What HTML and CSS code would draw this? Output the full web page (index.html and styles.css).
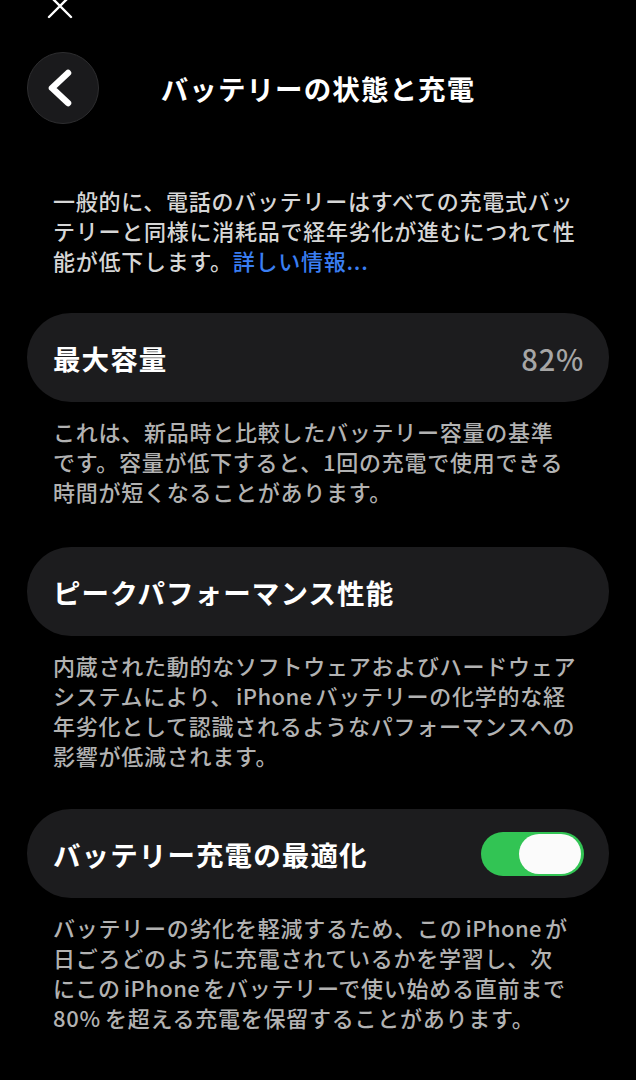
FILE: index.html
```html
<!DOCTYPE html>
<html lang="ja">
<head>
<meta charset="utf-8">
<title>バッテリーの状態と充電</title>
<link rel="stylesheet" href="styles.css">
</head>
<body>
<svg class="close" width="28" height="28" viewBox="0 0 28 28" aria-hidden="true">
  <path d="M3 3 L25 25 M25 3 L3 25" stroke="#fff" stroke-width="2.4" stroke-linecap="round" fill="none"/>
</svg>
<main class="page">
  <header class="nav">
    <button class="back" aria-label="戻る">
      <svg width="72" height="72" viewBox="0 0 72 72" aria-hidden="true">
        <path d="M41 21 L25 36 L41 51" stroke="#fff" stroke-width="6.5" stroke-linecap="round" stroke-linejoin="round" fill="none"/>
      </svg>
    </button>
    <h1 class="title">バッテリーの状態と充電</h1>
    <span class="spacer"></span>
  </header>

  <p class="intro">一般的に、電話のバッテリーはすべての充電式バッ<br>テリーと同様に消耗品で経年劣化が進むにつれて性<br>能が低下します。<a class="link" href="#">詳しい情報...</a></p>

  <section class="card card-first">
    <span class="card-label">最大容量</span>
    <span class="card-value">82%</span>
  </section>
  <p class="desc">これは、新品時と比較したバッテリー容量の基準<br>です。容量が低下すると、1回の充電で使用できる<br>時間が短くなることがあります。</p>

  <section class="card">
    <span class="card-label">ピークパフォーマンス性能</span>
  </section>
  <p class="desc desc-long">内蔵された動的なソフトウェアおよびハードウェア<br>システムにより、<span class="latin">iPhone</span>バッテリーの化学的な経<br>年劣化として認識されるようなパフォーマンスへの<br>影響が低減されます。</p>

  <section class="card">
    <span class="card-label">バッテリー充電の最適化</span>
    <span class="toggle" role="switch" aria-checked="true"><span class="knob"></span></span>
  </section>
  <p class="desc">バッテリーの劣化を軽減するため、この<span class="latin">iPhone</span>が<br>日ごろどのように充電されているかを学習し、次<br>にこの<span class="latin">iPhone</span>をバッテリーで使い始める直前まで<br>80%<span class="gap"></span>を超える充電を保留することがあります。</p>
</main>
</body>
</html>
```

FILE: styles.css
```css
* { box-sizing: border-box; }

html, body {
  margin: 0;
  padding: 0;
  background: #000;
}

body {
  position: relative;
  width: 636px;
  min-height: 1080px;
  overflow: hidden;
  font-family: "Noto Sans CJK JP", "Noto Sans", sans-serif;
  color: #fff;
}

.close {
  position: absolute;
  left: 46px;
  top: -8px;
}

.page {
  padding: 52px 27px 0 27px;
  display: flex;
  flex-direction: column;
}

.nav {
  display: grid;
  grid-template-columns: 72px 1fr 72px;
  align-items: center;
  height: 72px;
}

.back {
  width: 72px;
  height: 72px;
  padding: 0;
  border-radius: 50%;
  border: 1.5px solid #2e2e30;
  background: #1a1a1c;
  display: flex;
  align-items: center;
  justify-content: center;
}

.back svg { display: block; margin: -1.5px; }

.title {
  margin: 0;
  text-align: center;
  font-size: 27.5px;
  font-weight: 700;
  letter-spacing: 1.1px;
  line-height: 72px;
  color: #fff;
}

.intro, .desc {
  margin: 0;
  padding-left: 26px;
  font-size: 22px;
  font-weight: 500;
  letter-spacing: 0.75px;
  line-height: 30px;
  white-space: nowrap;
}

.intro {
  margin-top: 61px;
  color: #d6d6d6;
}

.link {
  color: #3a7ef2;
  text-decoration: none;
  font-weight: 500;
}

.desc {
  margin-top: 14px;
  margin-bottom: 41px;
  color: #b2b2b2;
}

.desc-long { margin-bottom: 39px; }

.latin {
  margin: 0 3px;
  letter-spacing: 0.4px;
}

.gap {
  display: inline-block;
  width: 4px;
}

.card {
  height: 89px;
  border-radius: 44px;
  background: #1c1c1e;
  display: flex;
  align-items: center;
  justify-content: space-between;
  padding: 0 25px 0 26px;
}

.card-first { margin-top: 38px; }

.card-label {
  font-size: 27.5px;
  font-weight: 700;
  letter-spacing: 1.1px;
  color: #fff;
}

.card-value {
  font-size: 29px;
  font-weight: 500;
  letter-spacing: 0.8px;
  color: #a6a6a6;
}

.toggle {
  width: 103px;
  height: 44px;
  border-radius: 22px;
  background: #32c454;
  display: flex;
  justify-content: flex-end;
  align-items: center;
  padding: 2px 3px;
}

.knob {
  width: 62px;
  height: 40px;
  border-radius: 20px;
  background: #fbfbfb;
}
```
